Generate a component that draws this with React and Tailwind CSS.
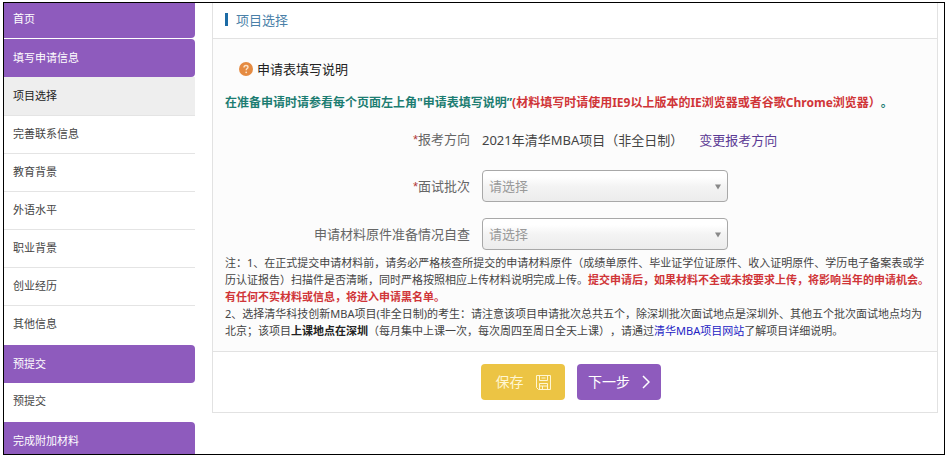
import React, { useState } from "react";

const menuGroups = [
  { title: "首页", items: [] },
  {
    title: "填写申请信息",
    items: ["项目选择", "完善联系信息", "教育背景", "外语水平", "职业背景", "创业经历", "其他信息"],
  },
  { title: "预提交", items: ["预提交"] },
  { title: "完成附加材料", items: [] },
];

const Sidebar = ({ active, onSelect }) => (
  <nav className="flex w-[191px] shrink-0 flex-col gap-px text-[11px] text-[#444]">
    {menuGroups.map((group, index) => (
      <div key={group.title}>
        <a
          href="#"
          className={`flex items-center bg-[#8e5bbd] pl-[9px] text-white ${
            index === 0 ? "h-[35px] rounded-br pb-0.5" : "h-[38px] rounded-r"
          }`}
        >
          {group.title}
        </a>
        <ul>
          {group.items.map((item) => (
            <li key={item} className="border-b border-[#e4e4e4] last:border-white">
              <a
                href="#"
                onClick={() => onSelect(item)}
                className={`flex items-center pl-[9px] ${
                  active === item ? "h-[38px] bg-[#eee] text-[#222]" : "h-[37px]"
                }`}
              >
                {item}
              </a>
            </li>
          ))}
        </ul>
      </div>
    ))}
  </nav>
);

const Required = () => <span className="font-['Liberation_Sans',sans-serif] text-[#b03a3a]">*</span>;

const SelectField = ({ id, label, required }) => (
  <div className="grid grid-cols-[245px_1fr] items-center gap-3">
    <label htmlFor={id} className="text-right text-[#666]">
      {required && <Required />}
      {label}
    </label>
    <div className="relative w-[246px]">
      <select
        id={id}
        className="block h-8 w-full appearance-none rounded border border-[#a8a8a8] bg-linear-to-b from-white from-20% via-[#f4f4f4] via-50% to-[#ececec] pr-6 pb-px pl-1.5 text-[#999]"
      >
        <option>请选择</option>
      </select>
      <svg viewBox="0 0 6 6" className="pointer-events-none absolute top-[14px] right-[7px] h-1.5 w-1.5">
        <path d="M0 0.5h6L3 5.5z" fill="#888" />
      </svg>
    </div>
  </div>
);

const HelpIcon = () => (
  <svg viewBox="0 0 14 14" className="h-3.5 w-3.5">
    <circle cx="7" cy="7" r="7" fill="#e58b42" />
    <path
      d="M5 5.4c0-1.2.9-1.9 2-1.9s2 .7 2 1.7c0 1.3-1.8 1.5-1.8 3"
      fill="none"
      stroke="#fbe3c8"
      strokeWidth="1.4"
    />
    <circle cx="7.2" cy="10.3" r="0.9" fill="#fbe3c8" />
  </svg>
);

const SaveIcon = () => (
  <svg viewBox="0 0 15 15" className="h-[15px] w-[15px]" fill="none" stroke="#fff6d2">
    <path d="M0.5 0.5h14v14H2.5l-2-2z" />
    <path d="M3.5 0.5v5h8v-5M5.5 3h4M3.5 14.5v-6h8v6M3.5 11h8M6.5 11v3.5" />
  </svg>
);

const App = () => {
  const [active, setActive] = useState("项目选择");

  return (
    <div className="h-screen bg-white pt-0.5 pr-px pb-0.5 pl-[3px] font-['Noto_Sans','Noto_Sans_CJK_SC',sans-serif] [text-spacing-trim:space-all]">
      <div className="flex h-full items-start gap-[17px] overflow-hidden border border-black pr-1.5">
        <Sidebar active={active} onSelect={setActive} />

        <main className="min-w-0 flex-1 border border-t-0 border-[#e2e2e2] text-[13px] leading-5">
          <header className="flex h-9 items-center border-b border-[#e2e2e2] pb-0.5 pl-3">
            <h1 className="flex items-center gap-2 text-[#4a80a8]">
              <span className="h-[13px] w-[3px] bg-[#1c6ba5]" />
              项目选择
            </h1>
          </header>

          <section className="border-b border-[#e2e2e2] bg-[#fcfcfc] pt-5 pr-1.5 pb-3 pl-3">
            <a href="#" className="ml-3.5 flex w-fit items-center gap-1 text-[#222]">
              <HelpIcon />
              申请表填写说明
            </a>

            <p className="mt-3.5 text-xs leading-5 font-bold text-[#1c7d72]">
              在准备申请时请参看每个页面左上角"申请表填写说明”
              <span className="text-[#d03538]">(材料填写时请使用IE9以上版本的IE浏览器或者谷歌Chrome浏览器）</span>。
            </p>

            <div className="mt-4 grid grid-cols-[245px_1fr] items-center gap-3">
              <span className="text-right text-[#666]">
                <Required />
                报考方向
              </span>
              <div className="flex gap-4 text-[#444]">
                <span>2021年清华MBA项目（非全日制）</span>
                <a href="#" className="text-[#5b3a94]">
                  变更报考方向
                </a>
              </div>
            </div>

            <div className="mt-5 flex flex-col gap-4">
              <SelectField id="batch" label="面试批次" required />
              <SelectField id="selfCheck" label="申请材料原件准备情况自查" />
            </div>

            <div className="mt-1 text-[11px] leading-[17px] text-[#444]">
              <p>
                注：1、在正式提交申请材料前，请务必严格核查所提交的申请材料原件（成绩单原件、毕业证学位证原件、收入证明原件、学历电子备案表或学历认证报告）扫描件是否清晰，同时严格按照相应上传材料说明完成上传。
                <b className="text-[#d03538]">
                  提交申请后，如果材料不全或未按要求上传，将影响当年的申请机会。有任何不实材料或信息，将进入申请黑名单。
                </b>
              </p>
              <p>
                2、选择清华科技创新MBA项目(非全日制)的考生：请注意该项目申请批次总共五个，除深圳批次面试地点是深圳外、其他五个批次面试地点均为北京；该项目
                <b className="text-[#222]">上课地点在深圳</b>
                （每月集中上课一次，每次周四至周日全天上课），请通过
                <a href="#" className="text-[#2323c4]">
                  清华MBA项目网站
                </a>
                了解项目详细说明。
              </p>
            </div>
          </section>

          <footer className="flex gap-3 py-3 pl-[268px] text-sm">
            <button type="button" className="flex h-9 w-[84px] items-center justify-center gap-3 rounded bg-[#ecc444] text-[#fff6d2]">
              保存
              <SaveIcon />
            </button>
            <button type="button" className="flex h-9 w-[84px] items-center justify-center gap-3 rounded bg-[#8e5bbd] text-white">
              下一步
              <svg viewBox="0 0 8 14" className="h-3.5 w-2" fill="none" stroke="currentColor" strokeWidth="1.5">
                <path d="M1 1l6 6-6 6" />
              </svg>
            </button>
          </footer>
        </main>
      </div>
    </div>
  );
};

export default App;
